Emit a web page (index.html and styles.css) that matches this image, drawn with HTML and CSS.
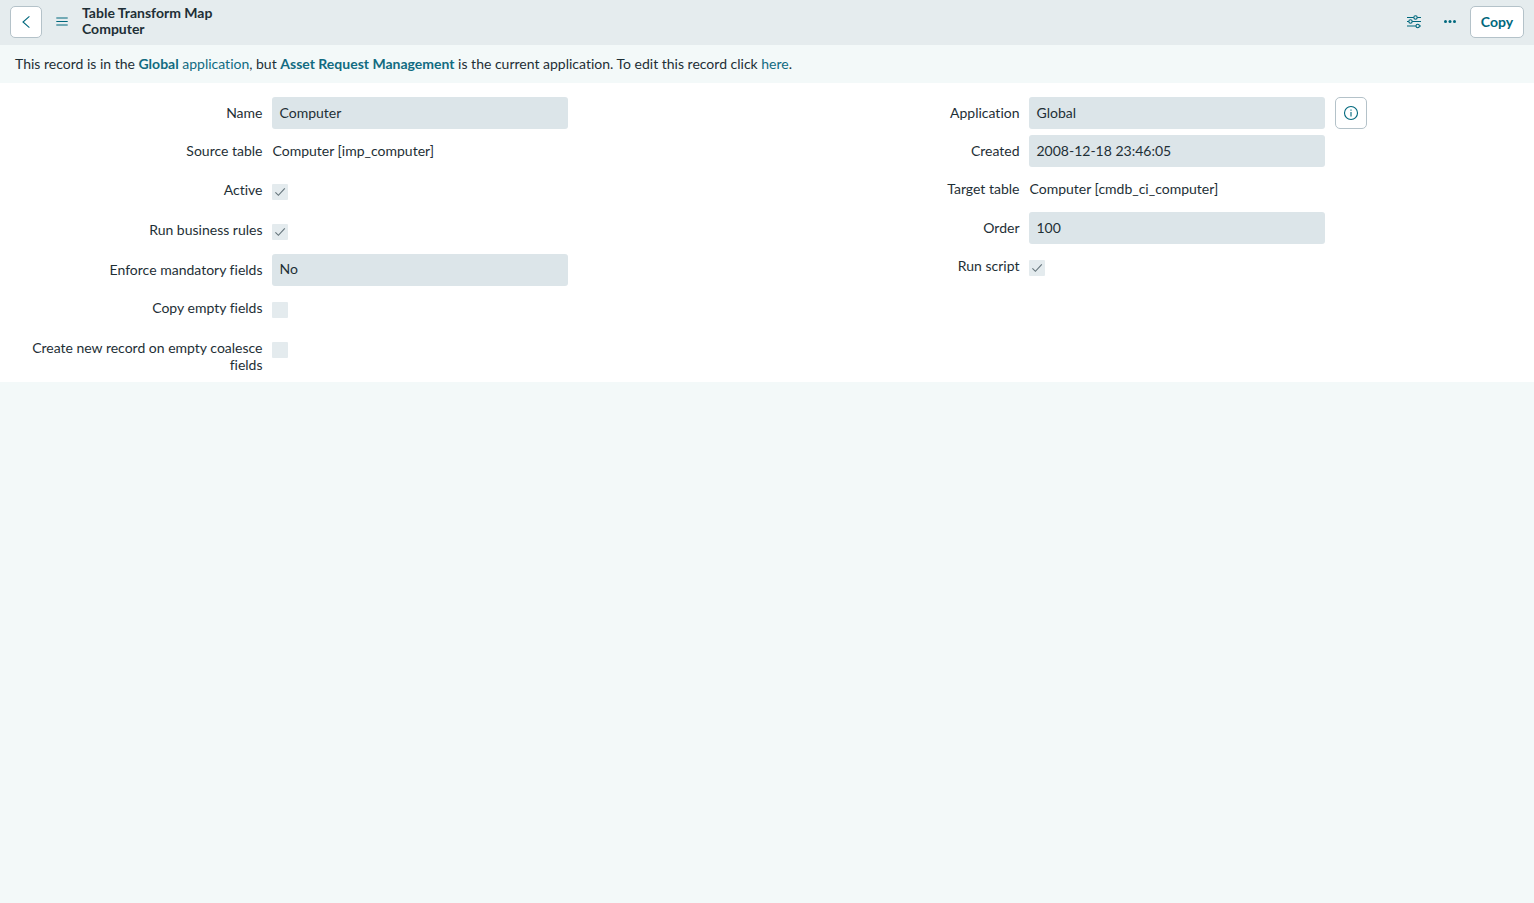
FILE: index.html
```html
<!DOCTYPE html>
<html lang="en">
<head>
    <meta charset="utf-8">
    <title>Computer | Table Transform Map</title>
    <link rel="stylesheet" href="styles.css">
</head>
<body>
    <header class="navbar">
        <button class="btn btn-icon" aria-label="Back">
            <svg width="16" height="16" viewBox="0 0 16 16"><path d="M11.4 2.4 5 8l6.4 5.6"/></svg>
        </button>
        <button class="icon-plain menu" aria-label="Additional actions">
            <svg width="16" height="16" viewBox="0 0 16 16"><path d="M2.3 4h11.4M2.3 7.5h11.4M2.3 11h11.4"/></svg>
        </button>
        <h1 class="title">Table Transform Map<br>Computer</h1>
        <div class="actions">
            <button class="icon-plain" aria-label="Personalize form">
                <svg width="16" height="16" viewBox="0 0 16 16"><path d="M1 3.5h6.8M11.2 3.5H15M1 7.5h1.8M6.2 7.5H15M1 12h9M13.4 12H15"/><circle cx="9.5" cy="3.5" r="1.7"/><circle cx="4.5" cy="7.5" r="1.7"/><circle cx="11.7" cy="12" r="1.7"/></svg>
            </button>
            <button class="icon-plain" aria-label="More options">
                <svg class="dots" width="16" height="16" viewBox="0 0 16 16"><circle cx="3.5" cy="7.5" r="1.5"/><circle cx="8" cy="7.5" r="1.5"/><circle cx="12.5" cy="7.5" r="1.5"/></svg>
            </button>
            <button class="btn btn-copy">Copy</button>
        </div>
    </header>

    <div class="message">This record is in the <a href="#"><b>Global</b> application</a>, but <a href="#"><b>Asset Request Management</b></a> is the current application. To edit this record click <a href="#">here</a>.</div>

    <form class="record">
        <div class="column">
            <div class="row">
                <label>Name</label>
                <div class="field">Computer</div>
            </div>
            <div class="row row-text">
                <label>Source table</label>
                <div class="value">Computer [imp_computer]</div>
            </div>
            <div class="row row-check">
                <label>Active</label>
                <span class="checkbox"><svg width="16" height="16" viewBox="0 0 16 16"><path d="M3.4 8.3l3 3 6.4-7"/></svg></span>
            </div>
            <div class="row row-check">
                <label>Run business rules</label>
                <span class="checkbox"><svg width="16" height="16" viewBox="0 0 16 16"><path d="M3.4 8.3l3 3 6.4-7"/></svg></span>
            </div>
            <div class="row">
                <label>Enforce mandatory fields</label>
                <div class="field field-select">No</div>
            </div>
            <div class="row row-check">
                <label>Copy empty fields</label>
                <span class="checkbox"></span>
            </div>
            <div class="row row-check">
                <label>Create new record on empty coalesce fields</label>
                <span class="checkbox"></span>
            </div>
        </div>
        <div class="column">
            <div class="row">
                <label>Application</label>
                <div class="field">Global</div>
                <button class="btn btn-icon" type="button" aria-label="Preview record">
                    <svg width="16" height="16" viewBox="0 0 16 16"><circle cx="8" cy="8" r="6.5"/><path d="M8 7v4.5M8 4.5v1.2"/></svg>
                </button>
            </div>
            <div class="row">
                <label>Created</label>
                <div class="field">2008-12-18 23:46:05</div>
            </div>
            <div class="row row-text">
                <label>Target table</label>
                <div class="value">Computer [cmdb_ci_computer]</div>
            </div>
            <div class="row">
                <label>Order</label>
                <div class="field">100</div>
            </div>
            <div class="row row-check">
                <label>Run script</label>
                <span class="checkbox"><svg width="16" height="16" viewBox="0 0 16 16"><path d="M3.4 8.3l3 3 6.4-7"/></svg></span>
            </div>
        </div>
    </form>
</body>
</html>
```
FILE: styles.css
```css
* {
    box-sizing: border-box;
}

body {
    margin: 0;
    background-color: #f3f9f9;
    color: #1e2f36;
    font-family: Lato, sans-serif;
    font-size: 14px;
    line-height: 17px;
    font-variant-ligatures: none;
}

a {
    color: #116b81;
    text-decoration: none;
}

button {
    padding: 0;
    font-family: inherit;
    color: #00687d;
    cursor: pointer;
}

svg {
    display: block;
    fill: none;
    stroke: currentColor;
    stroke-width: 1.1;
}

.navbar {
    display: flex;
    align-items: center;
    height: 45px;
    padding: 0 10px 1px;
    background-color: #e5ecee;
}

.btn {
    height: 32px;
    border: 1px solid #b4c2c9;
    border-radius: 5px;
    background-color: #fff;
}

.btn-icon {
    display: flex;
    align-items: center;
    justify-content: center;
    flex: none;
    width: 32px;
}

.btn-copy {
    width: 54px;
    padding-bottom: 2px;
    font-size: 14px;
    font-weight: bold;
}

.icon-plain {
    border: none;
    background: none;
}

.menu {
    margin: 0 12px;
}

.title {
    margin: 0 0 2px;
    font-size: 14px;
    line-height: 16px;
}

.actions {
    display: flex;
    align-items: center;
    margin-left: auto;
}

.actions .icon-plain {
    margin-right: 20px;
}

.actions .icon-plain + .icon-plain {
    margin-right: 12px;
}

.dots {
    fill: currentColor;
    stroke: none;
}

.message {
    height: 38px;
    padding: 10px 15px;
}

.record {
    display: grid;
    grid-template-columns: 757px 1fr;
    height: 299px;
    padding-top: 14px;
    background-color: #fff;
}

.row {
    display: flex;
    align-items: flex-start;
    height: 38px;
}

.row-text {
    height: 39px;
}

.row-check {
    height: 40px;
}

.row label {
    flex: none;
    width: 272px;
    padding: 7px 9.5px 0 15px;
    text-align: right;
}

.field {
    width: 296px;
    height: 32px;
    padding: 7px 7.5px;
    border-radius: 3px;
    background-color: #dce5e9;
}

.field-select {
    padding-top: 6px;
}

.value {
    padding: 7px 0 0 0.5px;
}

.checkbox {
    width: 16px;
    height: 16px;
    margin-top: 10px;
    border-radius: 1px;
    background-color: #e4ebee;
    color: #65747b;
}

.field + .btn {
    margin-left: 10px;
}
```
